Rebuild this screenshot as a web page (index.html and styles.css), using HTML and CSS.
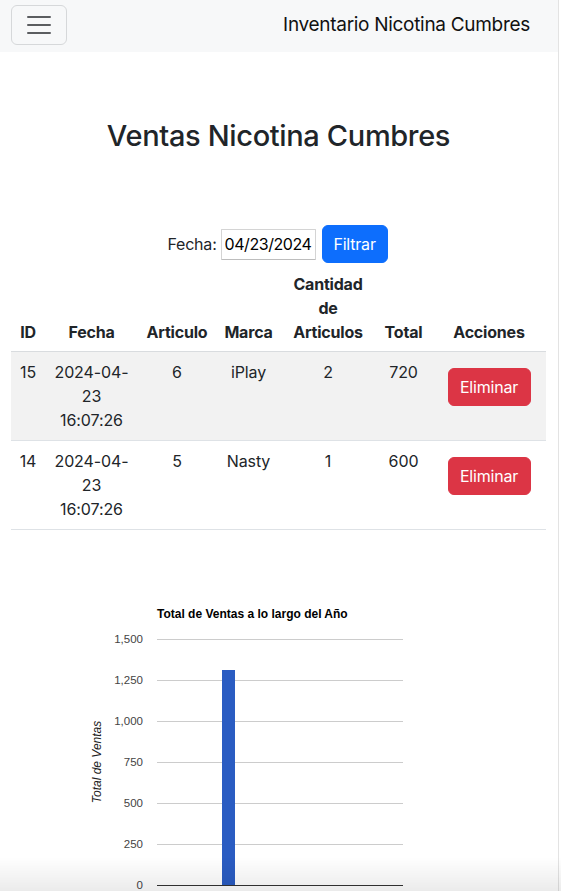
FILE: index.html
```html
<!DOCTYPE html>
<html lang="es">
<head>
<meta charset="utf-8">
<title>Ventas Nicotina Cumbres</title>
<link rel="stylesheet" href="styles.css">
</head>
<body>
<nav class="navbar">
  <button class="toggler" type="button" aria-label="Menú">
    <svg width="30" height="30" viewBox="0 0 30 30"><path d="M4 7h22M4 15h22M4 23h22" stroke="#5b5d60" stroke-width="2" stroke-linecap="round"/></svg>
  </button>
  <span class="brand">Inventario Nicotina Cumbres</span>
</nav>
<main class="container">
  <h1 class="title">Ventas Nicotina Cumbres</h1>
  <form class="filter">
    <label class="filter-label" for="fecha">Fecha:</label>
    <input class="date-input" id="fecha" type="text" value="04/23/2024">
    <button class="btn btn-primary" type="button">Filtrar</button>
  </form>
  <table class="sales">
    <colgroup>
      <col style="width:34px"><col style="width:93px"><col style="width:78px"><col style="width:65px"><col style="width:94px"><col style="width:57px"><col style="width:114px">
    </colgroup>
    <thead>
      <tr><th>ID</th><th>Fecha</th><th>Articulo</th><th>Marca</th><th>Cantidad de Articulos</th><th>Total</th><th>Acciones</th></tr>
    </thead>
    <tbody>
      <tr class="striped"><td>15</td><td>2024-04-23 16:07:26</td><td>6</td><td>iPlay</td><td>2</td><td>720</td><td><button class="btn btn-danger" type="button">Eliminar</button></td></tr>
      <tr><td>14</td><td>2024-04-23 16:07:26</td><td>5</td><td>Nasty</td><td>1</td><td>600</td><td><button class="btn btn-danger" type="button">Eliminar</button></td></tr>
    </tbody>
  </table>
  <div class="chart">
    <svg width="535" height="340" viewBox="0 0 535 340" font-family="'Liberation Sans', Arial, sans-serif">
      <text x="146" y="28" font-size="12" font-weight="bold" fill="#000">Total de Ventas a lo largo del Año</text>
      <g stroke="#cccccc" stroke-width="1">
        <line x1="146" x2="392" y1="49.5" y2="49.5"/>
        <line x1="146" x2="392" y1="90.5" y2="90.5"/>
        <line x1="146" x2="392" y1="131.5" y2="131.5"/>
        <line x1="146" x2="392" y1="172.5" y2="172.5"/>
        <line x1="146" x2="392" y1="213.5" y2="213.5"/>
        <line x1="146" x2="392" y1="254.5" y2="254.5"/>
      </g>
      <rect x="211" y="80" width="13" height="215" fill="#2a5cc2"/>
      <line x1="146" x2="392" y1="295.5" y2="295.5" stroke="#333" stroke-width="1"/>
      <g font-size="11.5" fill="#444" text-anchor="end">
        <text x="132" y="53">1,500</text>
        <text x="132" y="94">1,250</text>
        <text x="132" y="135">1,000</text>
        <text x="132" y="176">750</text>
        <text x="132" y="217">500</text>
        <text x="132" y="258">250</text>
        <text x="132" y="299">0</text>
      </g>
      <text x="90" y="172" font-size="12" font-style="italic" fill="#222" text-anchor="middle" transform="rotate(-90 90 172)">Total de Ventas</text>
    </svg>
  </div>
</main>
<div class="scrollbar" aria-hidden="true"></div>
<div class="bottom-shade" aria-hidden="true"></div>
</body>
</html>
```
FILE: styles.css
```css
* { box-sizing: border-box; }
html, body { margin: 0; padding: 0; }
body {
  width: 558px;
  font-family: "Inter", "Noto Sans", sans-serif;
  font-size: 16px;
  line-height: 24px;
  color: #212529;
  background: #fff;
}
.navbar {
  height: 52px;
  background: #f7f8f9;
  display: flex;
  align-items: flex-start;
  justify-content: space-between;
  padding: 5px 28px 0 11px;
}
.toggler {
  width: 56px;
  height: 40px;
  padding: 0;
  border: 1px solid #d6d8da;
  border-radius: 6px;
  background: transparent;
  display: flex;
  align-items: center;
  justify-content: center;
}
.toggler svg { display: block; }
.brand {
  font-size: 19px;
  line-height: 30px;
  margin-top: 5px;
  color: #111;
  letter-spacing: -0.3px;
}
.container { padding: 0 12px 0 11px; }
.title {
  margin: 66px 0 71px;
  font-size: 29px;
  line-height: 36px;
  font-weight: 500;
  text-align: center;
  letter-spacing: -0.35px;
}
.filter {
  display: flex;
  justify-content: center;
  align-items: center;
  height: 38px;
  margin-left: -2px;
}
.filter-label { margin-right: 4px; letter-spacing: -0.2px; }
.date-input {
  width: 95px;
  height: 31px;
  border: 1px solid #d4d4d4;
  border-bottom-color: #bdbdbd;
  border-radius: 1px;
  padding: 0 1px 0 3px;
  font: inherit;
  font-size: 16px;
  color: #000;
  letter-spacing: -0.45px;
  margin-right: 6px;
}
.btn {
  font: inherit;
  font-size: 16px;
  border: 1px solid transparent;
  border-radius: 6px;
  color: #fff;
  padding: 6px 12px;
  line-height: 24px;
  cursor: pointer;
  letter-spacing: -0.2px;
}
.btn-primary { background: #0d6efd; border-color: #0d6efd; width: 66px; padding: 6px 0; }
.btn-danger { background: #dc3545; border-color: #dc3545; width: 83px; padding: 6px 0; margin-top: 8px; }
.sales {
  width: 535px;
  table-layout: fixed;
  border-collapse: collapse;
  margin-top: 1px;
  text-align: center;
}
.sales th {
  font-weight: 700;
  vertical-align: bottom;
  padding: 8px 4px 7px;
  border-bottom: 1px solid #d9dcdf;
  letter-spacing: -0.2px;
}
.sales td {
  vertical-align: top;
  padding: 8px 4px;
  border-bottom: 1px solid #dee2e6;
  letter-spacing: -0.1px;
}
.striped td { background: #f2f2f2; }
.chart { margin-top: 60px; }
.chart svg { display: block; }
.scrollbar {
  position: fixed;
  top: 0;
  right: 0;
  bottom: 0;
  width: 3px;
  background: #fff;
  border-left: 1px solid #e3e3e3;
}
.bottom-shade {
  position: fixed;
  left: 0;
  right: 0;
  bottom: 0;
  height: 34px;
  background: linear-gradient(to bottom, rgba(0,0,0,0), rgba(0,0,0,0.08));
  pointer-events: none;
}
```
